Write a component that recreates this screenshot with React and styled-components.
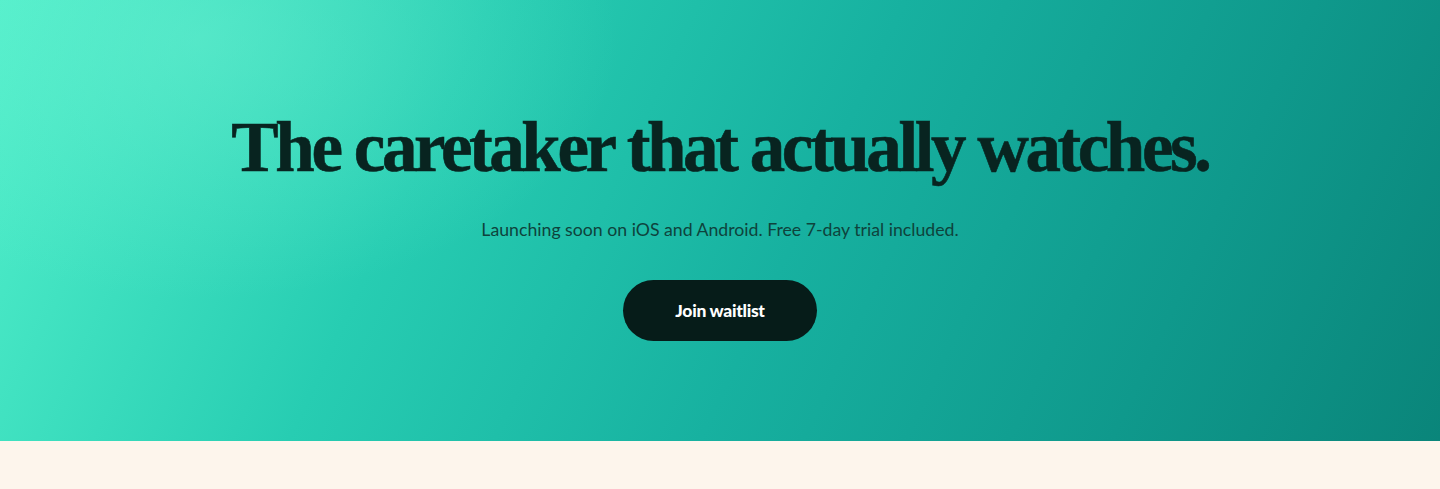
import React from 'react';
import styled, { createGlobalStyle } from 'styled-components';

const GlobalStyle = createGlobalStyle`
    * {
        box-sizing: border-box;
    }

    body {
        margin: 0;
        background: #fdf5ec;
        font-family: 'Lato', 'Liberation Sans', sans-serif;
    }
`;

const Page = styled.div`
    min-height: 489px;
    background: #fdf5ec;
`;

const Hero = styled.section`
    height: 441px;
    display: flex;
    flex-direction: column;
    align-items: center;
    padding-top: 107px;
    background:
        radial-gradient(ellipse 420px 260px at 200px 40px, rgba(110, 240, 210, 0.45), rgba(110, 240, 210, 0) 100%),
        linear-gradient(115deg, #52f0cb 0%, #27cdb2 30%, #17b1a0 55%, #0f998c 80%, #0a857a 100%);
`;

const Headline = styled.h1`
    margin: 0;
    font-family: 'Liberation Serif', 'DejaVu Serif', serif;
    font-weight: 700;
    font-size: 71px;
    line-height: 80px;
    letter-spacing: -3.4px;
    color: #082420;
    -webkit-text-stroke: 0.6px #082420;
`;

const Subtitle = styled.p`
    margin: 31px 0 0;
    font-family: 'Lato', 'Liberation Sans', sans-serif;
    font-size: 17.7px;
    line-height: 24px;
    color: #0e433c;
`;

const Button = styled.button`
    margin-top: 38px;
    width: 194px;
    height: 61px;
    border: none;
    border-radius: 999px;
    background: #061c19;
    color: #ffffff;
    font-family: 'Lato', 'Liberation Sans', sans-serif;
    font-weight: 900;
    font-size: 17.5px;
    letter-spacing: -0.3px;
    cursor: pointer;
`;

function App() {
    return (
        <Page>
            <GlobalStyle />
            <Hero>
                <Headline>The caretaker that actually watches.</Headline>
                <Subtitle>Launching soon on iOS and Android. Free 7-day trial included.</Subtitle>
                <Button>Join waitlist</Button>
            </Hero>
        </Page>
    );
}

export default App;
